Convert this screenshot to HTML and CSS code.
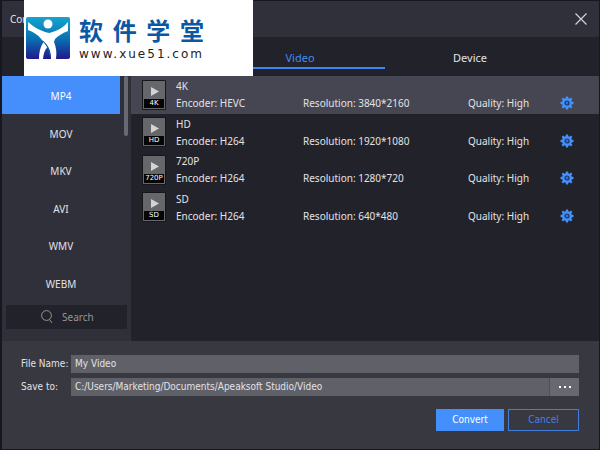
FILE: index.html
```
<!DOCTYPE html>
<html lang="en">
<head>
<meta charset="utf-8">
<meta name="viewport" content="width=device-width, initial-scale=1">
<title>Video</title>
<link rel="stylesheet" href="styles.css">
</head>
<body>
<svg class="defs" aria-hidden="true">
  <symbol id="gear" viewBox="0 0 14 14">
    <path fill="#4590fb" d="M6 .5h2l.4 1.8 1 .4L11 1.6 12.4 3l-1.1 1.6.4 1 1.8.4v2l-1.8.4-.4 1 1.1 1.6-1.4 1.4-1.6-1.1-1 .4L8 13.500H6l-.4-1.800-1-.4L3 12.400 1.600 11l1.100-1.600-.4-1L.5 8V6l1.800-.4.4-1L1.600 3 3 1.600l1.600 1.100 1-.4z"/>
    <circle cx="7" cy="7" r="2" fill="#2f72d8" stroke="#173866" stroke-width="1.200"/>
  </symbol>
  <symbol id="film" viewBox="0 0 24 30">
    <rect width="24" height="30" rx="1" fill="#17171b"/>
    <rect x="1" y="1" width="22" height="28" fill="#66676a"/>
    <path d="M9 7v9l8-4.500z" fill="#d4d4d4"/>
    <rect x="2" y="19" width="20" height="9" fill="#050506"/>
  </symbol>
</svg>
<main class="window">
  <header class="titlebar">
    <span>Con</span>
    <button class="close" aria-label="Close"><svg viewBox="0 0 12 12"><path d="M.5.5l11 11M11.500.5l-11 11" fill="none" stroke="#d2d2d6" stroke-width="1.200"/></svg></button>
  </header>
  <nav class="tabs">
    <a class="tab active" href="#">Video</a>
    <a class="tab" href="#">Device</a>
  </nav>
  <section class="content">
    <aside class="sidebar">
      <nav class="formats">
        <a class="format active" href="#">MP4</a>
        <a class="format" href="#">MOV</a>
        <a class="format" href="#">MKV</a>
        <a class="format" href="#">AVI</a>
        <a class="format" href="#">WMV</a>
        <a class="format" href="#">WEBM</a>
      </nav>
      <div class="scroll"></div>
      <label class="search">
        <svg viewBox="0 0 12 14"><circle cx="5.500" cy="5.500" r="4.900"/><path d="M8.500 9.500l2.500 3.500"/></svg>
        <input type="text" placeholder="Search" aria-label="Search">
      </label>
    </aside>
    <div class="presets">
      <article class="preset active">
        <div class="thumb"><svg><use href="#film"/></svg><span>4K</span></div>
        <h2>4K</h2><p class="enc">Encoder: HEVC</p><p>Resolution: 3840*2160</p><p>Quality: High</p>
        <button class="gear" aria-label="Settings"><svg><use href="#gear"/></svg></button>
      </article>
      <article class="preset">
        <div class="thumb"><svg><use href="#film"/></svg><span>HD</span></div>
        <h2>HD</h2><p class="enc">Encoder: H264</p><p>Resolution: 1920*1080</p><p>Quality: High</p>
        <button class="gear" aria-label="Settings"><svg><use href="#gear"/></svg></button>
      </article>
      <article class="preset">
        <div class="thumb"><svg><use href="#film"/></svg><span>720P</span></div>
        <h2>720P</h2><p class="enc">Encoder: H264</p><p>Resolution: 1280*720</p><p>Quality: High</p>
        <button class="gear" aria-label="Settings"><svg><use href="#gear"/></svg></button>
      </article>
      <article class="preset">
        <div class="thumb"><svg><use href="#film"/></svg><span>SD</span></div>
        <h2>SD</h2><p class="enc">Encoder: H264</p><p>Resolution: 640*480</p><p>Quality: High</p>
        <button class="gear" aria-label="Settings"><svg><use href="#gear"/></svg></button>
      </article>
    </div>
  </section>
  <form class="output">
    <div class="field">
      <label for="name">File Name:</label>
      <input id="name" type="text" value="My Video">
    </div>
    <div class="field">
      <label for="path">Save to:</label>
      <input id="path" type="text" value="C:/Users/Marketing/Documents/Apeaksoft Studio/Video">
      <button class="browse" type="button" aria-label="Browse"><svg viewBox="0 0 12 2"><path d="M0 0h2v2H0zM5 0h2v2H5zM10 0h2v2h-2z" fill="#fff"/></svg></button>
    </div>
    <div class="actions">
      <button class="convert" type="button">Convert</button>
      <button class="cancel" type="button">Cancel</button>
    </div>
  </form>
  <div class="brand" lang="zh-CN">
    <svg class="logo" viewBox="0 0 44 42">
      <defs>
        <linearGradient id="blue" x1="0" y1="0" x2="0" y2="1"><stop offset="0" stop-color="#14a5cd"/><stop offset=".5" stop-color="#0874b4"/><stop offset="1" stop-color="#20188a"/></linearGradient>
      </defs>
      <rect width="44" height="42" rx="2" fill="url(#blue)"/>
      <circle cx="22" cy="7" r="4.500" fill="#fff"/>
      <path fill="#fff" d="M2 5c6 5 11 8 17 10l4 1c8-2 14-5 19-11v9c-6 2-10 5-13 8 0 1-1 2-1 3 2 5 3 10 2 17h-5c0-9-3-14-9-19C12 18 8 15 2 13z"/>
      <path fill="#fff" d="M17.500 25l4 5c-3 3-4 7-4.500 12h-4c0-6 1-12 4.500-17z"/>
      <path fill="none" stroke="#0b62aa" stroke-width="1" d="M17 24c4 4 6 8 7 14"/>
    </svg>
    <div class="brand-text"><strong><span>软</span><span>件</span><span>学</span><span>堂</span></strong><small>www.xue51.com</small></div>
  </div>
</main>
</body>
</html>
```
FILE: styles.css
```
* { box-sizing: border-box; }
body {
  margin: 0;
  background: #171722;
  color: #e2e2e6;
  font: 10px/16px "Noto Sans", sans-serif;
}
h2, p { margin: 0; font-size: 10px; font-weight: 400; }
a { color: inherit; text-decoration: none; }
button { margin: 0; padding: 0; border: 0; background: none; color: inherit; font: inherit; }
input { min-width: 0; border: 0; color: inherit; font: inherit; outline: 0; }
svg { display: block; }
.defs { position: absolute; width: 0; height: 0; }
.window {
  position: relative;
  display: grid;
  grid-template-rows: 36px 39px 265px 1fr;
  min-height: 100vh;
  border: 1px solid #171722;
  border-left-width: 2px;
  background: #22222a;
}
.titlebar {
  display: flex;
  align-items: center;
  justify-content: space-between;
  padding: 0 12px 0 8px;
  background: #30303b;
}
.close svg { width: 12px; height: 12px; }
.tabs {
  display: grid;
  grid-template-columns: repeat(3, 170px);
  justify-content: center;
  padding: 0 1px 7px 0;
  font-size: 11px;
}
.tab {
  display: flex;
  align-items: center;
  justify-content: center;
  padding-top: 12px;
  border-bottom: 2px solid transparent;
}
.tab.active { grid-column: 2; border-color: #3d85f5; color: #4189f6; }
.content { display: grid; grid-template-columns: 129px 1fr; }
.sidebar {
  display: grid;
  grid-template: 1fr 40px / 118px 1fr;
  background: #30303b;
}
.formats { display: grid; grid-template-rows: repeat(6, 1fr); }
.format { display: flex; align-items: center; justify-content: center; padding-top: 3px; }
.format.active { background: #448ffc; color: #fff; }
.scroll { width: 4px; height: 60px; margin-left: 4px; border-radius: 2px; background: #696973; }
.search {
  grid-column: 1 / -1;
  display: flex;
  align-items: center;
  gap: 9px;
  height: 24px;
  margin: 4px 4px 0;
  padding-left: 35px;
  background: #22222a;
  color: #96969b;
}
.search svg { flex: none; width: 12px; height: 14px; fill: none; stroke: #96969b; }
.search input { width: 60px; padding: 0; background: none; }
.search input::placeholder { color: #96969b; opacity: 1; }
.presets { display: grid; grid-template-rows: repeat(6, 1fr); padding-bottom: 40px; }
.preset {
  display: grid;
  grid-template-columns: 24px 117px 155px 1fr 14px;
  grid-template-rows: 17px 17px;
  column-gap: 10px;
  align-content: center;
  align-items: center;
  padding: 0 25px 0 11px;
}
.preset.active { background: #464652; }
.preset h2 { grid-column: 2 / -1; }
.preset .enc { grid-column: 2; }
.thumb { position: relative; grid-row: 1 / 3; }
.thumb svg { width: 24px; height: 30px; }
.thumb span {
  position: absolute;
  inset: auto 0 2px;
  color: #fff;
  font: 7px/9px "DejaVu Sans", sans-serif;
  text-align: center;
}
.gear svg { width: 14px; height: 14px; }
.output {
  padding: 14px 20px 0 19px;
  background: #383841;
  font-family: "DejaVu Sans Condensed", "DejaVu Sans", sans-serif;
}
.field { display: flex; height: 18px; margin-bottom: 5px; }
.field label { flex: none; width: 50px; line-height: 18px; white-space: nowrap; }
.field input { flex: 1; padding: 0 4px; background: #606068; }
.browse { display: grid; place-items: center; width: 30px; border-left: 1px solid #505058; background: #686870; }
.browse svg { width: 12px; height: 2px; }
.actions { display: flex; justify-content: flex-end; gap: 4px; padding-top: 8px; }
.actions button { height: 22px; }
.convert { width: 68px; background: #448ffc; color: #fff; }
.cancel { width: 71px; border: 1px solid #427cdf; color: #4581e4; }
.brand {
  position: absolute;
  top: -1px;
  left: 22px;
  display: flex;
  gap: 9px;
  width: 229px;
  height: 76px;
  padding: 13px 2px 0;
  background: #fff;
}
.logo { width: 44px; height: 42px; margin-top: 4px; }
.brand-text { display: grid; grid-template-rows: 34px 14px; align-content: start; width: 125px; }
.brand strong {
  display: flex;
  justify-content: space-between;
  color: #0b57a4;
  font: 700 24px/34px "Noto Sans CJK SC", sans-serif;
}
.brand small { color: #222; font: 12px/14px "DejaVu Sans", sans-serif; letter-spacing: 2px; }
```
